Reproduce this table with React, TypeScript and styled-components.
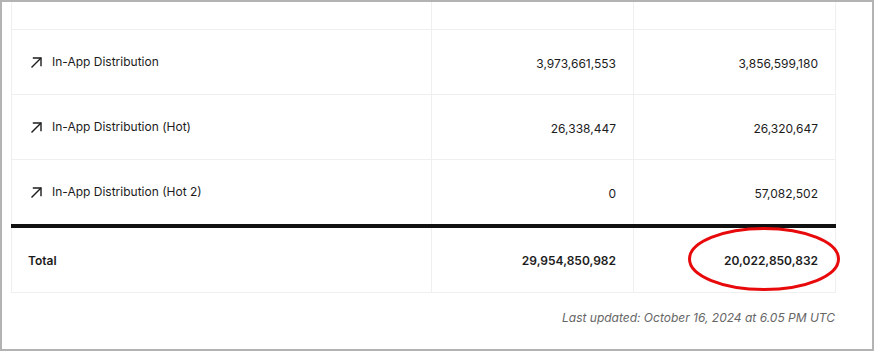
import * as React from 'react'
import styled, { createGlobalStyle } from 'styled-components'

const GlobalStyle = createGlobalStyle`
    html, body {
        margin: 0;
        padding: 0;
        background: #ffffff;
    }
    body {
        font-family: Inter, 'Liberation Sans', sans-serif;
        color: #1c1c1c;
    }
`

interface IRow {
    label: string
    first: string
    second: string
}

type Shift = 'up' | 'down' | 'none'

const rows: IRow[] = [
    { label: 'In-App Distribution', first: '3,973,661,553', second: '3,856,599,180' },
    { label: 'In-App Distribution (Hot)', first: '26,338,447', second: '26,320,647' },
    { label: 'In-App Distribution (Hot 2)', first: '0', second: '57,082,502' }
]

const Frame = styled.div`
    box-sizing: border-box;
    width: 874px;
    height: 351px;
    border: 2px solid #b3b3b3;
    overflow: hidden;
    background: #fff;
`

const Content = styled.div`
    margin-top: -38px;
    padding: 0 37px 0 9px;
`

const Table = styled.table`
    width: 824px;
    border-collapse: collapse;
    table-layout: fixed;
    font-size: 12px;
`

const shiftPadding = (s: Shift = 'down') =>
    s === 'up' ? '0 17px 4px 16px' : s === 'down' ? '2px 17px 0 16px' : '0 17px 0 16px'

const shiftHeight = (s: Shift = 'down') => (s === 'none' ? '64px' : s === 'up' ? '60px' : '62px')

const Cell = styled.td<{ $align?: 'left' | 'right'; $bold?: boolean; $shift?: Shift }>`
    height: ${(p) => shiftHeight(p.$shift)};
    padding: ${(p) => shiftPadding(p.$shift)};
    border: 1px solid #efefef;
    text-align: ${(p) => p.$align || 'right'};
    font-weight: ${(p) => (p.$bold ? 600 : 400)};
    color: #1c1c1c;
    vertical-align: middle;
    position: relative;
`

const TotalRow = styled.tr`
    border-top: 4px solid #111;
`

const Label = styled.span`
    display: inline-flex;
    align-items: center;
    gap: 10px;
`

const LinkText = styled.span`
    color: #3b5bdb;
`

const Highlight = styled.svg`
    position: absolute;
    left: 54px;
    top: 0px;
    overflow: visible;
    pointer-events: none;
`

const Footer = styled.div`
    padding: 17px 0 0;
    width: 824px;
    text-align: right;
    font-size: 12px;
    font-style: italic;
    color: #666;
`

const ArrowIcon: React.FC = () => (
    <svg width="14" height="14" viewBox="0 0 14 14" fill="none" stroke="#1c1c1c" strokeWidth="1.4" strokeLinecap="square">
        <path d="M4 12 L12.5 3.5" />
        <path d="M5.5 3 H13 V10.5" />
    </svg>
)

const App: React.FC = () => (
    <Frame>
        <GlobalStyle />
        <Content>
            <Table>
                <colgroup>
                    <col style={{ width: 420 }} />
                    <col style={{ width: 202 }} />
                    <col style={{ width: 202 }} />
                </colgroup>
                <tbody>
                    <tr>
                        <Cell $align="left" $shift="up">
                            <Label>
                                <ArrowIcon />
                                Borrowing (Hot)
                            </Label>
                        </Cell>
                        <Cell $shift="up" />
                        <Cell $shift="up">
                            <LinkText>(1,204)</LinkText>
                        </Cell>
                    </tr>
                    {rows.map((row, i) => (
                        <tr key={i}>
                            <Cell $align="left">
                                <Label>
                                    <ArrowIcon />
                                    {row.label}
                                </Label>
                            </Cell>
                            <Cell>{row.first}</Cell>
                            <Cell>{row.second}</Cell>
                        </tr>
                    ))}
                    <TotalRow>
                        <Cell $align="left" $bold $shift="none">
                            Total
                        </Cell>
                        <Cell $bold $shift="none">
                            29,954,850,982
                        </Cell>
                        <Cell $bold $shift="none">
                            20,022,850,832
                            <Highlight width="152" height="64">
                                <ellipse
                                    cx="76"
                                    cy="31"
                                    rx="74.5"
                                    ry="30.5"
                                    fill="none"
                                    stroke="#e8090b"
                                    strokeWidth="3"
                                />
                            </Highlight>
                        </Cell>
                    </TotalRow>
                </tbody>
            </Table>
            <Footer>Last updated: October 16, 2024 at 6.05 PM UTC</Footer>
        </Content>
    </Frame>
)

export default App
